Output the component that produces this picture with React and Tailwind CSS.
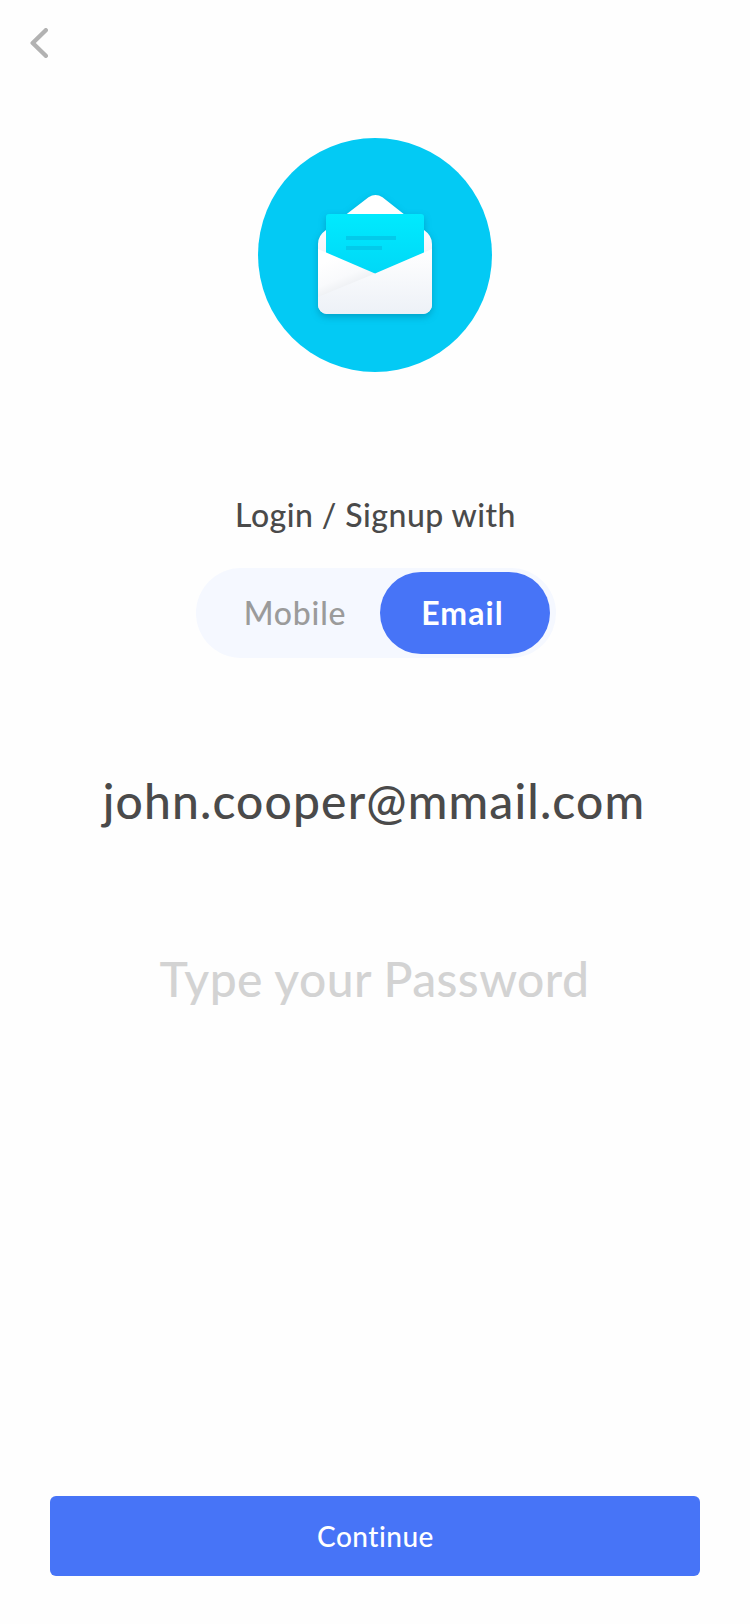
function EnvelopeIcon() {
  return (
    <svg className="h-[234px] w-[234px]" viewBox="0 0 234 234" fill="none" aria-hidden="true">
      <defs>
        <linearGradient id="front" x1="117" y1="111" x2="117" y2="176" gradientUnits="userSpaceOnUse">
          <stop stopColor="#ffffff" />
          <stop offset="1" stopColor="#edf1f7" />
        </linearGradient>
        <linearGradient id="left" x1="81" y1="118" x2="92.4" y2="145.6" gradientUnits="userSpaceOnUse">
          <stop stopColor="#ffffff" />
          <stop offset="0.7" stopColor="#f9fafc" />
          <stop offset="1" stopColor="#f0f2f5" />
        </linearGradient>
        <linearGradient id="back" x1="117" y1="57" x2="117" y2="130" gradientUnits="userSpaceOnUse">
          <stop offset="0.3" stopColor="#ffffff" />
          <stop offset="1" stopColor="#edf0f7" />
        </linearGradient>
        <linearGradient id="letter" x1="117" y1="76" x2="117" y2="136" gradientUnits="userSpaceOnUse">
          <stop stopColor="#00eafe" />
          <stop offset="1" stopColor="#00d8f7" />
        </linearGradient>
        <filter id="shadow" x="40" y="40" width="154" height="160" filterUnits="userSpaceOnUse" colorInterpolationFilters="sRGB">
          <feDropShadow dx="0" dy="3" stdDeviation="3.5" floodColor="#004a68" floodOpacity="0.3" />
        </filter>
      </defs>
      <circle cx="117" cy="117" r="117" fill="#03caf4" />
      <g filter="url(#shadow)">
        <path d="M110.5 59.3Q117.5 54.7 124.5 59.3L166 92Q174 97.5 174 106V167A9 9 0 0 1 165 176H69A9 9 0 0 1 60 167V106Q60 97.5 68 92Z" fill="url(#back)" />
        <path d="M68 140V79Q68 76 71 76H163Q166 76 166 79V140Z" fill="url(#letter)" />
        <path d="M88 98H138V102H88ZM88 108H124V112H88Z" fill="#03caea" />
        <path d="M60 111L117 135.5V160H60Z" fill="url(#left)" />
        <path d="M60 159L117 135.5L174 111V167A9 9 0 0 1 165 176H69A9 9 0 0 1 60 167Z" fill="url(#front)" />
      </g>
    </svg>
  );
}

export default function App() {
  return (
    <main className="flex h-[1624px] w-[750px] flex-col items-center bg-[#fefefe] font-['Lato','Noto_Sans',sans-serif] text-[#4a4a4a]">
      <header className="flex h-[138px] w-full items-start pt-7 pl-[30px]">
        <button aria-label="Back">
          <svg className="h-[30px] w-[18px]" viewBox="0 0 18 30" fill="none">
            <path d="M15.8 2.2L2.7 15L15.8 27.8" stroke="#b2b2b2" strokeWidth="4.4" strokeLinecap="round" strokeLinejoin="round" />
          </svg>
        </button>
      </header>
      <EnvelopeIcon />
      <h1 className="mt-[123px] h-10 pl-px text-[32px] leading-10 font-medium tracking-[0.46px] whitespace-nowrap">Login / Signup with</h1>
      <div className="mt-[33px] ml-0.5 flex h-[90px] w-[360px] items-center rounded-full bg-[#f5f8ff] pr-1.5 text-[32px] leading-10">
        <button className="h-[82px] flex-1 pl-3.5 font-medium tracking-[0.8px] text-[#9b9b9b]">Mobile</button>
        <button className="h-[82px] w-[170px] rounded-full bg-[#4774f7] pr-[5px] font-bold tracking-[1.1px] text-white">Email</button>
      </div>
      <div className="mt-[111px] h-16 pr-0.5 text-[48px] leading-16 font-medium tracking-[1.13px] whitespace-nowrap">john.cooper@mmail.com</div>
      <div className="mt-[114px] h-16 pr-px text-[48px] leading-16 font-medium tracking-[0.43px] whitespace-nowrap text-[#d3d3d3]">Type your Password</div>
      <button className="mt-auto mb-12 h-20 w-[650px] rounded-md bg-[#4774f7] pl-px text-[28px] leading-9 font-medium tracking-[0.5px] text-white">Continue</button>
    </main>
  );
}
